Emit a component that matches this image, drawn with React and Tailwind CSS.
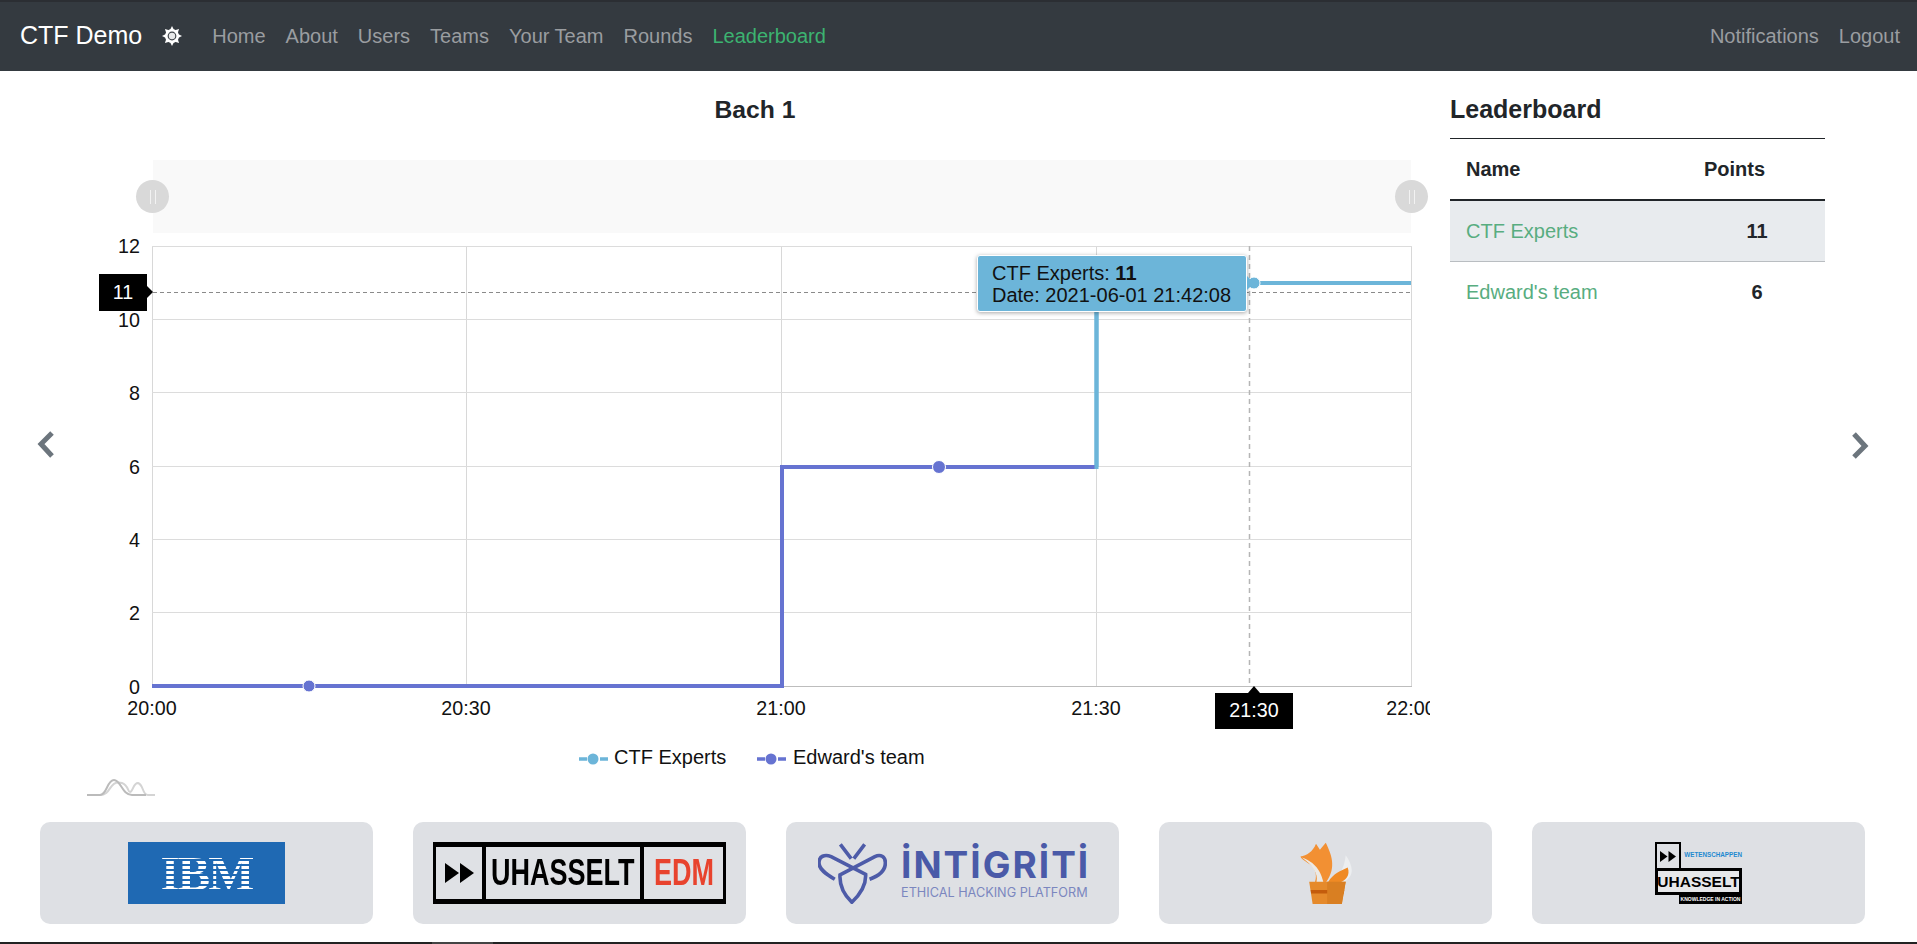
import React from 'react';

const navLinks = ['Home', 'About', 'Users', 'Teams', 'Your Team', 'Rounds'];
const teams = [
    { name: 'CTF Experts', points: 11, rowClass: 'bg-[#e8ebee] border-b border-[#b9bdc1]' },
    { name: "Edward's team", points: 6, rowClass: '' },
];

const yTicks = [
    { label: '12', y: 246 },
    { label: '10', y: 319.5 },
    { label: '8', y: 392.5 },
    { label: '6', y: 466.5 },
    { label: '4', y: 539.5 },
    { label: '2', y: 612.5 },
    { label: '0', y: 686.5 },
];
const xTicks = [
    { label: '20:00', x: 152 },
    { label: '20:30', x: 466 },
    { label: '21:00', x: 781 },
    { label: '21:30', x: 1096 },
    { label: '22:00', x: 1411 },
];

const BLUE = '#6cb5d9';
const PURPLE = '#6673d1';

const Chevron = ({ flip }) => (
    <svg width="20" height="30" viewBox="0 0 20 30" className={flip ? 'rotate-180' : ''}>
        <polyline points="16,3 5,14 16,26" fill="none" stroke="#6c757d" strokeWidth="5" />
    </svg>
);

const SunIcon = () => (
    <svg width="20" height="20" viewBox="-10 -10 20 20">
        {[0, 45, 90, 135, 180, 225, 270, 315].map((a) => (
            <polygon key={a} points="-2,-6 0,-10 2,-6" fill="#fff" transform={`rotate(${a})`} />
        ))}
        <circle r="7" fill="#fff" />
        <circle r="4.4" fill="#3f444a" />
        <circle r="3.2" fill="#e8e9ea" />
    </svg>
);

const Handle = ({ className }) => (
    <div className={`absolute top-[20px] w-[33px] h-[33px] rounded-full bg-[#d9d9d9] flex items-center justify-center gap-[4px] ${className}`}>
        <div className="w-[1px] h-[14px] bg-[#f2f2f2]" />
        <div className="w-[1px] h-[14px] bg-[#f2f2f2]" />
    </div>
);

const ChartSvg = () => (
    <svg width="1338" height="537" viewBox="92 233 1338 537" className="block font-['Liberation_Sans',sans-serif]">
        {xTicks.map((t) => (
            <line key={t.label} x1={t.x + 0.5} x2={t.x + 0.5} y1="246" y2="687" stroke="#d8d8d8" />
        ))}
        {yTicks.map((t) => (
            <line key={t.label} x1="152" x2="1412" y1={Math.floor(t.y) + 0.5} y2={Math.floor(t.y) + 0.5} stroke={t.label === '0' ? '#bdbdbd' : '#dcdcdc'} />
        ))}
        <line x1="153" x2="1411" y1="292.5" y2="292.5" stroke="#8a8a8a" strokeDasharray="4 3" />
        <line x1="1249.5" x2="1249.5" y1="246" y2="686" stroke="#b5b5b5" strokeWidth="1.5" strokeDasharray="5 4" />

        <polyline points="1096.5,467 1096.5,283 1411,283" fill="none" stroke={BLUE} strokeWidth="4" />
        <polyline points="152,686 782,686 782,467 1095,467" fill="none" stroke={PURPLE} strokeWidth="4" />
        <line x1="1096.5" x2="1096.5" y1="469" y2="300" stroke={BLUE} strokeWidth="4" />

        <circle cx="309" cy="686" r="6" fill={PURPLE} stroke="#fff" />
        <circle cx="939" cy="467" r="6.5" fill={PURPLE} stroke="#fff" />
        <circle cx="1254" cy="283" r="6" fill={BLUE} stroke="#fff" />

        {yTicks.map((t) => (
            <text key={t.label} x="140" y={t.y + 7} textAnchor="end" fontSize="19.7" fill="#111">{t.label}</text>
        ))}
        {xTicks.map((t) => (
            <text key={t.label} x={t.x} y="715" textAnchor="middle" fontSize="19.7" fill="#111">{t.label}</text>
        ))}

        <line x1="579" x2="608" y1="759" y2="759" stroke={BLUE} strokeWidth="3.5" strokeDasharray="8 13 8" />
        <circle cx="593" cy="759" r="5.5" fill={BLUE} />
        <text x="614" y="764" fontSize="20" fill="#111">CTF Experts</text>
        <line x1="757" x2="786" y1="759" y2="759" stroke={PURPLE} strokeWidth="3.5" strokeDasharray="8 13 8" />
        <circle cx="771" cy="759" r="5.5" fill={PURPLE} />
        <text x="793" y="764" fontSize="20" fill="#111">Edward's team</text>
    </svg>
);

const Tooltip = () => (
    <div className="absolute left-[885px] top-[22px] w-[270px] h-[57px] rounded-[3px] bg-[#6cb5d9] border border-white shadow-[0_1px_4px_rgba(0,0,0,0.35)] pl-[14px] pt-[6px] text-[20px] leading-[22px] text-[#111] whitespace-nowrap">
        <div>CTF Experts: <span className="font-bold">11</span></div>
        <div>Date: 2021-06-01 21:42:08</div>
        <div className="absolute -right-[8px] top-[20px] w-0 h-0 border-y-[7px] border-y-transparent border-l-[7px] border-l-[#6cb5d9]" />
    </div>
);

const CrosshairLabels = () => (
    <>
        <div className="absolute left-[7px] top-[41px] w-[48px] h-[37px] bg-black text-white text-[19.7px] flex items-center justify-center">
            11
            <div className="absolute -right-[6px] top-[12px] w-0 h-0 border-y-[6px] border-y-transparent border-l-[6px] border-l-black" />
        </div>
        <div className="absolute left-[1123px] top-[460px] w-[78px] h-[36px] bg-black text-white text-[19.7px] flex items-center justify-center">
            21:30
            <div className="absolute -top-[7px] left-[33px] w-0 h-0 border-x-[6px] border-x-transparent border-b-[7px] border-b-black" />
        </div>
    </>
);

const IbmLogo = () => (
    <div className="w-[157px] h-[62px] bg-[#1f69b3] flex items-center justify-center">
        <span className="font-['Liberation_Serif',serif] font-bold text-[49px] leading-[35px] tracking-[-2px] bg-[repeating-linear-gradient(to_bottom,#fff_0,#fff_3.5px,#1f69b3_3.5px,#1f69b3_5px)] bg-clip-text text-transparent">IBM</span>
    </div>
);

const EdmLogo = () => (
    <div className="w-[293px] h-[62px] bg-black flex gap-[4px] px-[3px] py-[5px] font-bold">
        <div className="w-[46px] bg-[#dfe1e5] flex items-center justify-center">
            <svg width="29" height="20" viewBox="0 0 29 20">
                <polygon points="0,0 14,10 0,20" fill="#000" />
                <polygon points="15,0 29,10 15,20" fill="#000" />
            </svg>
        </div>
        <div className="w-[154px] bg-[#dfe1e5] flex items-center justify-center text-[36px] text-black overflow-hidden">
            <span className="scale-x-75 whitespace-nowrap">UHASSELT</span>
        </div>
        <div className="flex-1 bg-[#dfe1e5] flex items-center justify-center text-[36px] text-[#e8432e] overflow-hidden">
            <span className="scale-x-75">EDM</span>
        </div>
    </div>
);

const IntigritiLogo = () => (
    <div className="flex items-center gap-[14px]">
        <svg width="69" height="61" viewBox="145 95 210 185" fill="none" stroke="#4d5ba8" strokeWidth="11">
            <path d="M213 99 L246 142 M287 99 L254 142" />
            <path d="M196 205 C170 190 148 175 148 155 C148 135 165 128 185 136 L290 190 C292 225 275 250 248 275 C222 250 210 225 212 192 L318 136 C335 128 350 135 350 155 C350 178 330 195 302 205" />
        </svg>
        <div className="font-['Inter',sans-serif] text-[#4a5aa8] w-[186px]">
            <div className="text-[37px] leading-[36px] font-bold tracking-[2px] whitespace-nowrap">İNTİGRİTİ</div>
            <div className="text-[12.7px] leading-[14px] mt-[3px] text-[#7b87bf] whitespace-nowrap">ETHICAL HACKING PLATFORM</div>
        </div>
    </div>
);

const FoxLogo = () => (
    <svg width="56" height="63" viewBox="300 95 115 190" preserveAspectRatio="none">
        <path d="M360 215 C385 205 395 175 398 135 C412 165 418 195 395 215 Z" fill="#eceef0" />
        <path d="M362 216 C372 190 388 182 402 172 C408 195 398 212 385 218 Z" fill="#f08a24" />
        <path d="M337 100 L345 118 L357 97 C368 130 380 170 358 216 L335 216 C340 190 335 170 320 158 C312 150 306 145 305 139 C318 135 330 125 337 100 Z" fill="#f29033" />
        <path d="M308 142 C322 150 345 165 352 216 L338 216 C342 190 330 165 308 142 Z" fill="#eceae6" />
        <polygon points="323,215 398,215 390,282 330,282" fill="#e58a2b" />
        <polygon points="326,240 395,240 394,250 327,250" fill="#c45c0c" />
        <polygon points="360,215 398,215 390,282 360,282" fill="#d97f22" />
    </svg>
);

const HasseltLogo = () => (
    <div className="w-[87px] h-[62px] font-bold">
        <div className="flex h-[26px]">
            <div className="w-[29px] border-2 border-b-0 border-black flex items-center justify-center">
                <svg width="16" height="11" viewBox="0 0 16 11">
                    <polygon points="0,0 7.5,5.5 0,11" fill="#000" />
                    <polygon points="8.5,0 16,5.5 8.5,11" fill="#000" />
                </svg>
            </div>
            <span className="ml-[3px] self-center text-[6.3px] text-[#1f8ad0] whitespace-nowrap">WETENSCHAPPEN</span>
        </div>
        <div className="h-[27px] border-[3px] border-black bg-[#e6e7e9] flex items-center justify-center text-[15.5px] leading-none text-black">UHASSELT</div>
        <div className="ml-[24px] h-[9px] bg-black text-white text-[5px] leading-[9px] text-center whitespace-nowrap">KNOWLEDGE IN ACTION</div>
    </div>
);

const logos = [IbmLogo, EdmLogo, IntigritiLogo, FoxLogo, HasseltLogo];

const App = () => {
    return (
        <div className="h-[944px] flex flex-col overflow-hidden bg-white font-['Liberation_Sans',Arial,sans-serif] text-[#212529]">
            <nav className="h-[71px] shrink-0 bg-[#343a40] border-t-2 border-[#2b2e33] flex items-center pl-[20px] pr-[17px] pb-[2px] text-[20px]">
                <a className="text-[25px] text-white">CTF Demo</a>
                <span className="ml-[20px] mr-[30px] flex"><SunIcon /></span>
                <div className="flex gap-[20px] text-[#9a9da0]">
                    {navLinks.map((l) => <a key={l}>{l}</a>)}
                    <a className="text-[#3cb371]">Leaderboard</a>
                </div>
                <div className="ml-auto flex gap-[20px] text-[#9a9da0]">
                    <a>Notifications</a>
                    <a>Logout</a>
                </div>
            </nav>

            <div className="h-[699px] flex shrink-0">
                <div className="w-[92px] shrink-0 flex justify-center pt-[359px]">
                    <Chevron />
                </div>
                <div className="w-[1338px] shrink-0">
                    <h2 className="h-[89px] pt-[24px] pr-[12px] text-center text-[24.7px] leading-[30px] font-bold">Bach 1</h2>
                    <div className="relative ml-[61px] w-[1258px] h-[73px] bg-[#f9f9f9]">
                        <Handle className="-left-[17px]" />
                        <Handle className="-right-[17px]" />
                    </div>
                    <div className="relative">
                        <ChartSvg />
                        <Tooltip />
                        <CrosshairLabels />
                    </div>
                </div>
                <div className="ml-[20px] w-[375px] shrink-0">
                    <h3 className="h-[68px] pt-[23px] text-[25px] leading-[30px] font-bold border-b border-[#212529]">Leaderboard</h3>
                    <table className="w-full table-fixed text-[20px]">
                        <thead>
                            <tr className="h-[61px] border-b-2 border-[#212529] font-bold">
                                <th className="w-[239px] pl-[16px] text-left">Name</th>
                                <th className="pl-[15px] text-left">Points</th>
                            </tr>
                        </thead>
                        <tbody>
                            {teams.map((team) => (
                                <tr key={team.name} className={`h-[61px] ${team.rowClass}`}>
                                    <td className="pl-[16px] text-[#58ad80]">{team.name}</td>
                                    <td className="text-center font-bold">{team.points}</td>
                                </tr>
                            ))}
                        </tbody>
                    </table>
                </div>
                <div className="w-[70px] flex justify-center pt-[359px]">
                    <Chevron flip />
                </div>
            </div>

            <div className="h-[52px] shrink-0 pl-[87px] pt-[8px]">
                <svg width="70" height="20" viewBox="87 778 70 20" fill="none" strokeWidth="2">
                    <path d="M100 795 C112 795 108 780 122 783 C128 785 128 792 130 792 C133 792 133 783 138 783 C144 785 142 795 148 795 L155 795" stroke="#d4d4d4" />
                    <path d="M87 795 L100 795 C107 795 107 780 114 780 C121 780 122 795 132 795 L146 795" stroke="#bbbbbb" />
                </svg>
            </div>

            <div className="flex gap-[40px] px-[40px] shrink-0">
                {logos.map((Logo, i) => (
                    <div key={i} className="w-[333px] h-[102px] rounded-[10px] bg-[#dee0e4] flex items-center justify-center">
                        <Logo />
                    </div>
                ))}
            </div>

            <div className="mt-auto h-[2px] bg-[#222222]">
                <div className="ml-[432px] w-[61px] h-full bg-[#444444]" />
            </div>
        </div>
    );
};

export default App;
